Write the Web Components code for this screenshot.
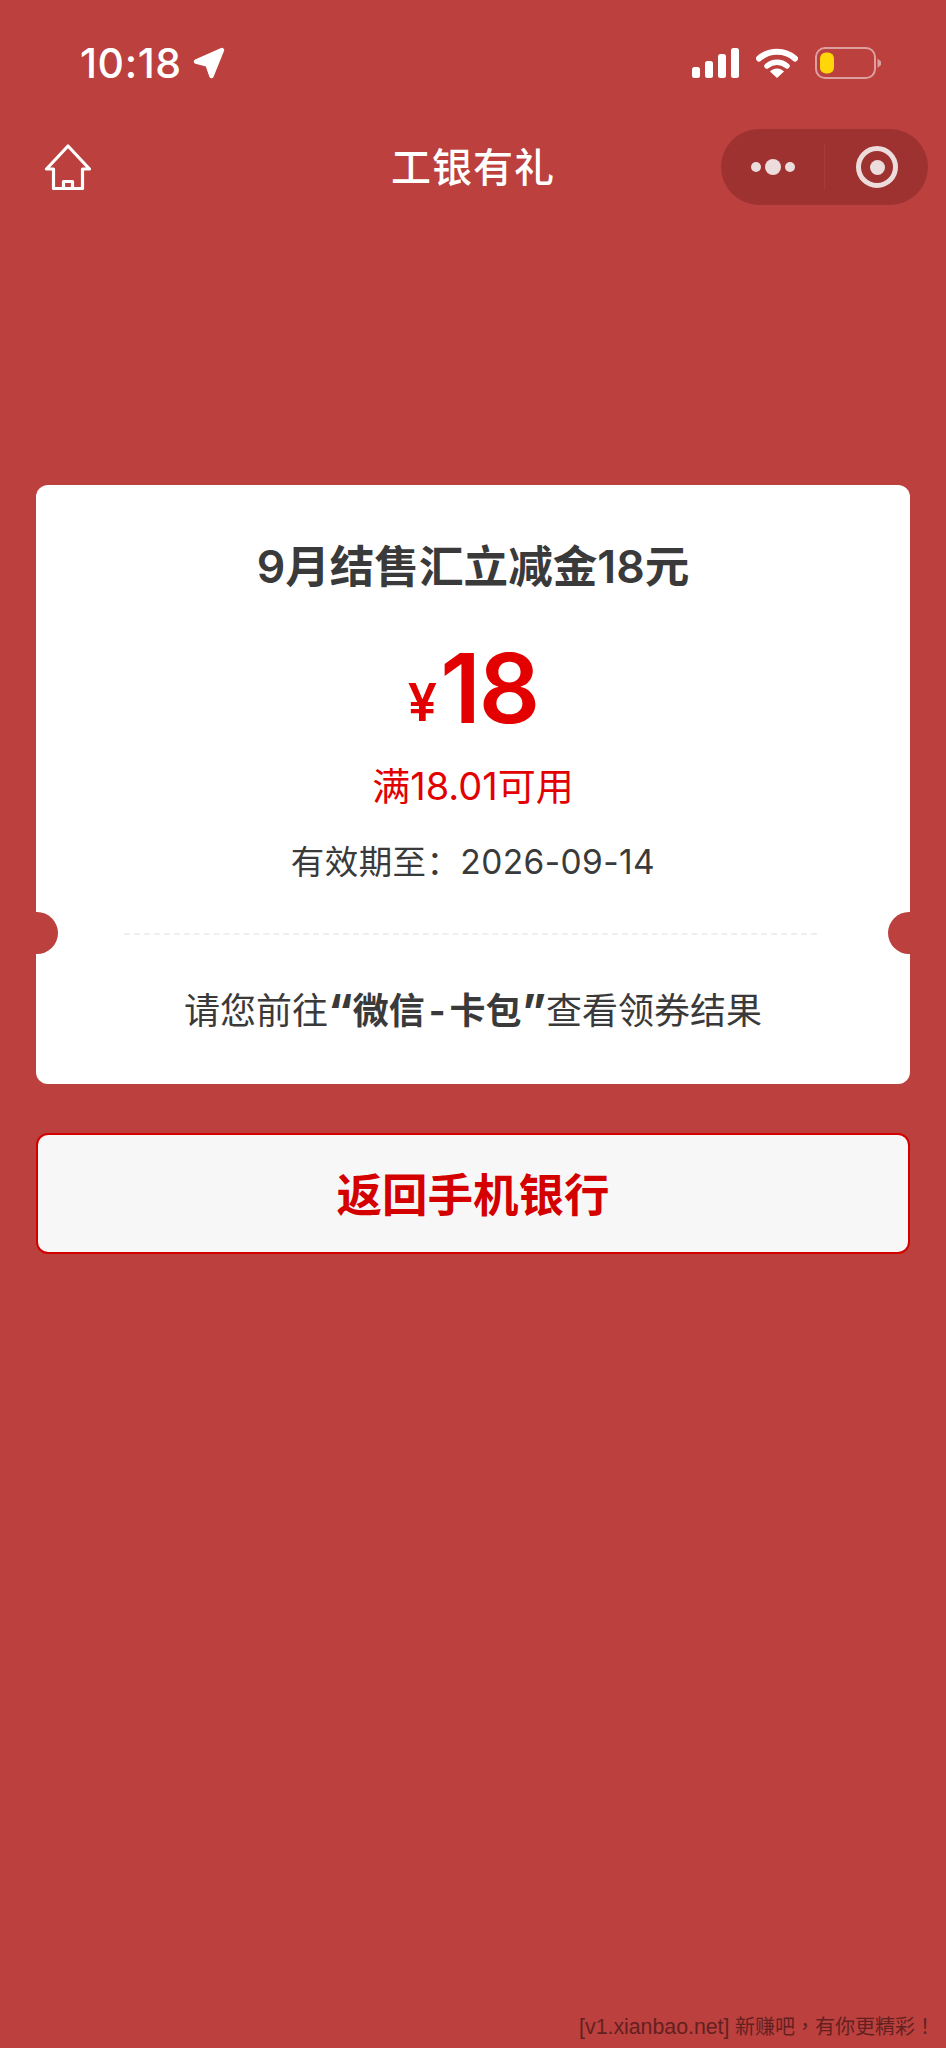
<!DOCTYPE html>
<html lang="zh-CN">
<head>
<meta charset="utf-8">
<title>工银有礼</title>
<style>
  html, body { margin: 0; padding: 0; background: #bb403e; }
  body { font-family: Inter, "Noto Sans CJK SC", sans-serif; }
</style>
</head>
<body>
<app-page>
  <status-bar slot="top" time="10:18"></status-bar>
  <nav-bar slot="top">工银有礼</nav-bar>
  <coupon-card slot="main">
    <span slot="title">9月结售汇立减金18元</span>
    <span slot="amount">18</span>
    <span slot="limit">满18.01可用</span>
    <span slot="expiry">有效期至：2026-09-14</span>
    <span slot="note">请您前往<b><span style="font-size:46px;line-height:0;vertical-align:-4px">“</span>微信<span style="padding:0 4px">-</span>卡包<span style="font-size:46px;line-height:0;vertical-align:-4px">”</span></b>查看领券结果</span>
  </coupon-card>
  <action-button slot="main">返回手机银行</action-button>
  <span slot="footer" lang="zh-TW"><span style="font-size:21.3px">[v1.xianbao.net]</span> 新赚吧，有你更精彩！</span>
</app-page>

<script>
(function () {
    function define(name, markup, init) {
        const template = document.createElement('template');
        template.innerHTML = markup;
        customElements.define(name, class extends HTMLElement {
            constructor() {
                super();
                this.attachShadow({mode: 'open'});
                this.shadowRoot.appendChild(template.content.cloneNode(true));
            }
            connectedCallback() {
                if (init) init(this);
            }
        });
    }

    define('app-page', `
    <style>
        :host { display: flex; flex-direction: column; height: 2048px; background: #bb403e; overflow: hidden; }
        main { display: flex; flex-direction: column; gap: 49px; padding: 0 36px; margin-top: 280px; }
        footer { margin-top: auto; padding: 0 11px 8px 0; text-align: right; font: 20px/26px "Liberation Sans", "Noto Sans CJK TC", sans-serif; color: #642020; }
    </style>
    <slot name="top"></slot>
    <main><slot name="main"></slot></main>
    <footer><slot name="footer"></slot></footer>
    `);

    define('status-bar', `
    <style>
        :host { display: flex; align-items: center; height: 32px; padding: 47px 64px 0 80px; color: #fff; }
        .time { font: 500 41px/32px Inter, sans-serif; letter-spacing: .6px; }
        .arrow { margin-left: 10px; }
        .right { margin-left: auto; display: flex; align-items: center; gap: 17px; }
        svg { display: block; }
    </style>
    <span class="time"></span>
    <svg class="arrow" width="34" height="32" viewBox="0 0 34 32"><path d="M30 3 4 14.500 15.500 17.500 19.500 29Z" fill="#fff" stroke="#fff" stroke-width="4.500" stroke-linejoin="round"/></svg>
    <div class="right">
        <svg width="47" height="30" viewBox="0 0 47 30" fill="#fff">
            <rect x="0" y="19" width="8" height="11" rx="2.500"/>
            <rect x="13" y="13" width="8" height="17" rx="2.500"/>
            <rect x="26" y="6" width="8" height="24" rx="2.500"/>
            <rect x="39" y="0" width="8" height="30" rx="2.500"/>
        </svg>
        <svg width="42" height="30" viewBox="0 0 42 30">
            <path d="M3 10.500C13 1.500 29 1.500 39 10.500" fill="none" stroke="#fff" stroke-width="6" stroke-linecap="round"/>
            <path d="M11 18C17 13 25 13 31 18" fill="none" stroke="#fff" stroke-width="5.500" stroke-linecap="round"/>
            <path d="M14 23.500C18 19.500 24 19.500 28 23.500L21 30Z" fill="#fff"/>
        </svg>
        <svg width="67" height="32" viewBox="0 0 67 32">
            <rect x="1" y="1" width="59" height="30" rx="9" fill="none" stroke="#fff" stroke-opacity=".5" stroke-width="2"/>
            <rect x="5" y="5.500" width="14" height="21" rx="6" fill="#ffd60a"/>
            <path d="M62.500 11.500 66 14.500V18L62.500 21Z" fill="#fff" fill-opacity=".5"/>
        </svg>
    </div>
    `, el => {
        el.shadowRoot.querySelector('.time').textContent = el.getAttribute('time');
    });

    define('nav-bar', `
    <style>
        :host { display: grid; grid-template-columns: 1fr auto 1fr; align-items: center; height: 76px; padding: 50px 18px 0; color: #fff; }
        svg { display: block; margin-left: 26px; }
        .title { font: 500 40px/74px Inter, "Noto Sans CJK SC", sans-serif; padding-top: 2px; letter-spacing: 1px; }
        capsule-menu { justify-self: end; }
    </style>
    <svg width="48" height="47" viewBox="0 0 48 47" fill="none" stroke="#fff" stroke-width="3.200" stroke-linejoin="round" stroke-linecap="round">
        <path d="M24 2 2.500 25H9.500V44.500H38.500V25H45.500Z"/>
        <path d="M19.500 44.500V37.500H28.500V44.500"/>
    </svg>
    <div class="title"><slot></slot></div>
    <capsule-menu></capsule-menu>
    `);

    define('capsule-menu', `
    <style>
        :host { display: flex; align-items: center; width: 207px; height: 76px; border-radius: 38px; background: #9e3231; }
        .more { display: flex; align-items: center; justify-content: center; gap: 4px; width: 103px; }
        .more i { display: block; width: 10px; height: 10px; border-radius: 50%; background: #ecdcdc; }
        .more i.big { width: 16px; height: 16px; }
        .sep { width: 1px; height: 46px; background: #ab3a39; }
        .ring { width: 42px; height: 42px; margin-left: 31px; box-sizing: border-box; border: 5px solid #ecdcdc; border-radius: 50%; display: flex; align-items: center; justify-content: center; }
        .ring i { display: block; width: 15px; height: 15px; border-radius: 50%; background: #ecdcdc; }
    </style>
    <div class="more"><i></i><i class="big"></i><i></i></div>
    <div class="sep"></div>
    <div class="ring"><i></i></div>
    `);

    define('coupon-card', `
    <style>
        :host { display: block; position: relative; height: 599px; background: #fff; border-radius: 12px; text-align: center; color: #3a3a3a; overflow: hidden; }
        .top { display: flex; flex-direction: column; align-items: center; height: 448px; }
        .title { font: 600 44.600px/56px Inter, "Noto Sans CJK SC", sans-serif; margin-top: 54px; }
        .amount { display: flex; align-items: baseline; justify-content: center; color: #e20000; margin-top: 38px; height: 110px; }
        .amount em { font: 600 52px/110px Inter, sans-serif; margin-right: 3px; position: relative; top: -2px; }
        .amount div { font: 600 96px/110px Inter, sans-serif; letter-spacing: -2px; }
        .limit { font: 400 38px/46px Inter, "Noto Sans CJK SC", sans-serif; color: #e20000; margin-top: 20px; }
        .expiry { font: 400 33.500px/44px Inter, "Noto Sans CJK SC", sans-serif; letter-spacing: .4px; margin-top: 31px; }
        .line { margin: 0 93px 0 88px; border-top: 2px dashed #efefef; }
        .note { font: 400 36px/46px Inter, "Noto Sans CJK SC", sans-serif; margin-top: 53px; }
        ::slotted(b) { font-weight: 700; }
        .notch { position: absolute; top: 427px; width: 42px; height: 42px; border-radius: 50%; background: #bb403e; }
        .notch.l { left: -20px; }
        .notch.r { right: -20px; }
    </style>
    <div class="top">
        <div class="title"><slot name="title"></slot></div>
        <div class="amount"><em>¥</em><div><slot name="amount"></slot></div></div>
        <div class="limit"><slot name="limit"></slot></div>
        <div class="expiry"><slot name="expiry"></slot></div>
    </div>
    <div class="line"></div>
    <div class="note"><slot name="note"></slot></div>
    <i class="notch l"></i><i class="notch r"></i>
    `);

    define('action-button', `
    <style>
        :host { display: flex; align-items: center; justify-content: center; box-sizing: border-box; height: 121px; padding-top: 5px; background: #f7f7f7; border: 2.500px solid #d40000; border-radius: 12px; color: #d40000; font: 700 45.500px/1 Inter, "Noto Sans CJK SC", sans-serif; }
    </style>
    <slot></slot>
    `);
})();
</script>
</body>
</html>
